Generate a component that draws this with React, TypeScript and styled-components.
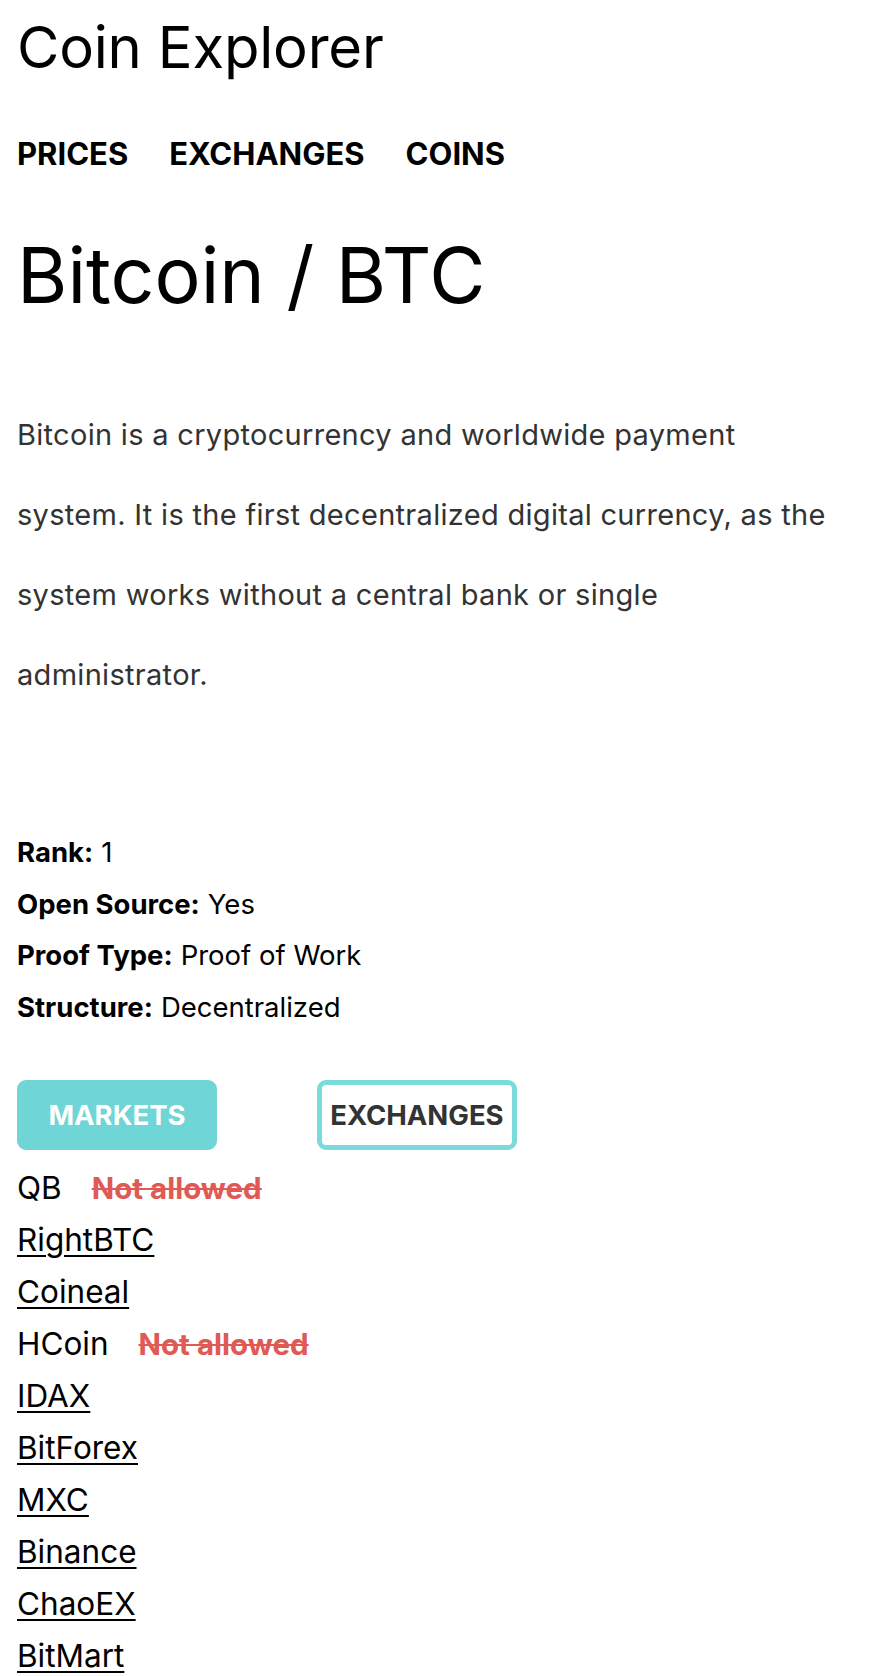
import React from "react";
import styled, { createGlobalStyle } from "styled-components";

const GlobalStyle = createGlobalStyle`
  html, body {
    margin: 0;
    padding: 0;
    background: #ffffff;
  }
  body {
    font-family: Inter, "Noto Sans", Roboto, sans-serif;
    color: #000;
  }
`;

const Page = styled.div`
  padding: 0 17px 20px;
`;

const SiteTitle = styled.div`
  margin: 10px 0 0;
  font-size: 58px;
  line-height: 74px;
  font-weight: 400;
  color: #000;
  letter-spacing: -0.2px;
`;

const Nav = styled.nav`
  display: flex;
  gap: 41px;
  margin-top: 53px;
`;

const NavLink = styled.a`
  font-size: 31px;
  line-height: 34px;
  font-weight: 700;
  color: #000;
  text-decoration: none;
`;

const CoinTitle = styled.h1`
  margin: 55px 0 0;
  font-size: 77px;
  line-height: 98px;
  font-weight: 400;
`;

const Description = styled.p`
  margin: 71px 0 0;
  font-size: 29px;
  line-height: 80px;
  letter-spacing: 0.3px;
  color: #333;
  max-width: 818px;
`;

const InfoList = styled.div`
  margin-top: 112px;
  display: flex;
  flex-direction: column;
`;

const InfoRow = styled.div`
  font-size: 27.5px;
  line-height: 51.5px;
`;

const InfoLabel = styled.b`
  font-weight: 700;
  margin-right: 8px;
`;

const Tabs = styled.div`
  display: flex;
  gap: 100px;
  margin-top: 47px;
`;

const TabButton = styled.button<{ $active?: boolean }>`
  width: 200px;
  height: 70px;
  box-sizing: border-box;
  border-radius: 9px;
  border: 5px solid ${(p) => (p.$active ? "#6fd5d6" : "#7bdadb")};
  background: ${(p) => (p.$active ? "#6fd5d6" : "#fff")};
  color: ${(p) => (p.$active ? "#fff" : "#333")};
  font-family: Inter, "Noto Sans", sans-serif;
  font-size: 27.5px;
  font-weight: 700;
  padding: 0;
  display: flex;
  align-items: center;
  justify-content: center;
`;

const ExchangeList = styled.ul`
  list-style: none;
  margin: 12px 0 0;
  padding: 0;
`;

const ExchangeItem = styled.li`
  display: flex;
  align-items: baseline;
  gap: 30px;
  font-size: 31.5px;
  line-height: 52px;
`;

const ExchangeLink = styled.a`
  color: #000;
  text-decoration: underline;
  text-underline-offset: 4px;
  text-decoration-thickness: 2px;
`;

const ExchangeName = styled.span`
  color: #000;
`;

const NotAllowed = styled.span`
  color: #df5a55;
  font-size: 29.5px;
  font-weight: 700;
  text-decoration: line-through;
  text-decoration-thickness: 2px;
`;

const exchanges: { name: string; allowed: boolean }[] = [
  { name: "QB", allowed: false },
  { name: "RightBTC", allowed: true },
  { name: "Coineal", allowed: true },
  { name: "HCoin", allowed: false },
  { name: "IDAX", allowed: true },
  { name: "BitForex", allowed: true },
  { name: "MXC", allowed: true },
  { name: "Binance", allowed: true },
  { name: "ChaoEX", allowed: true },
  { name: "BitMart", allowed: true },
];

export default function App() {
  return (
    <>
      <GlobalStyle />
      <Page>
        <SiteTitle>Coin Explorer</SiteTitle>
        <Nav>
          <NavLink href="#">PRICES</NavLink>
          <NavLink href="#">EXCHANGES</NavLink>
          <NavLink href="#">COINS</NavLink>
        </Nav>
        <CoinTitle>Bitcoin / BTC</CoinTitle>
        <Description>
          Bitcoin is a cryptocurrency and worldwide payment system. It is the
          first decentralized digital currency, as the system works without a
          central bank or single administrator.
        </Description>
        <InfoList>
          <InfoRow>
            <InfoLabel>Rank:</InfoLabel>1
          </InfoRow>
          <InfoRow>
            <InfoLabel>Open Source:</InfoLabel>Yes
          </InfoRow>
          <InfoRow>
            <InfoLabel>Proof Type:</InfoLabel>Proof of Work
          </InfoRow>
          <InfoRow>
            <InfoLabel>Structure:</InfoLabel>Decentralized
          </InfoRow>
        </InfoList>
        <Tabs>
          <TabButton $active>MARKETS</TabButton>
          <TabButton>EXCHANGES</TabButton>
        </Tabs>
        <ExchangeList>
          {exchanges.map((ex) => (
            <ExchangeItem key={ex.name}>
              {ex.allowed ? (
                <ExchangeLink href="#">{ex.name}</ExchangeLink>
              ) : (
                <>
                  <ExchangeName>{ex.name}</ExchangeName>
                  <NotAllowed>Not allowed</NotAllowed>
                </>
              )}
            </ExchangeItem>
          ))}
        </ExchangeList>
      </Page>
    </>
  );
}
